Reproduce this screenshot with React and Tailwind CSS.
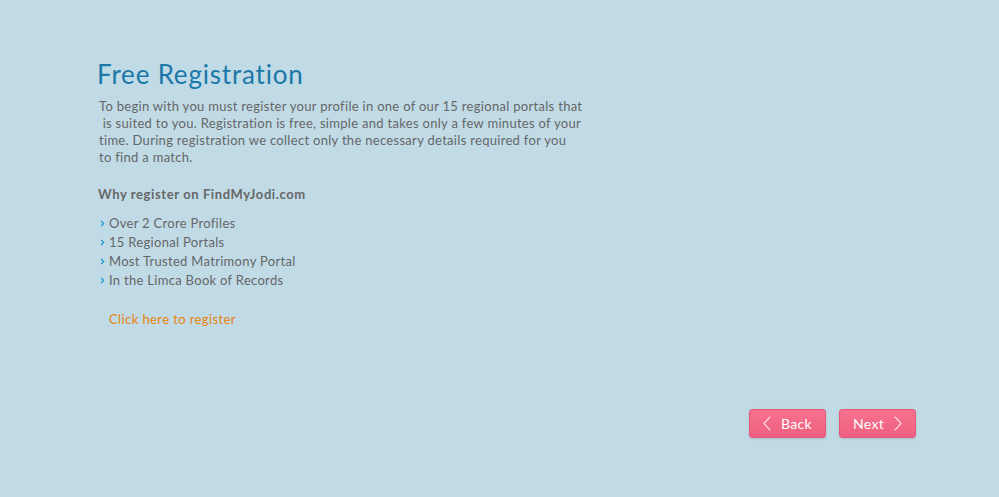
import { ChevronRight } from 'lucide-react'

const font = { fontFamily: 'Lato, "Open Sans", sans-serif' }

const reasons = [
  'Over 2 Crore Profiles',
  '15 Regional Portals',
  'Most Trusted Matrimony Portal',
  'In the Limca Book of Records',
]

// thin arrow used inside the pink buttons
function Arrow({ left }) {
  return (
    <svg className="h-[15px] w-[8px]" viewBox="0 0 8 15" fill="none" stroke="currentColor" strokeWidth={1.1}>
      <path d={left ? 'M7 1 1 7.5 7 14' : 'M1 1l6 6.5L1 14'} strokeLinecap="round" strokeLinejoin="round" />
    </svg>
  )
}

function NavButton({ children }) {
  return (
    <button
      type="button"
      className="flex h-[29px] w-[77px] items-center justify-center gap-[10px] rounded-[3px] border border-[#e8587a] bg-gradient-to-b from-[#f7728f] to-[#ee5f80] text-[14px] tracking-[0.3px] text-white shadow-sm"
    >
      {children}
    </button>
  )
}

export default function App() {
  return (
    <div
      className="flex h-[497px] w-full flex-col justify-between bg-[#c0dbe6] pb-[59px] pl-[97px] pr-[83px] pt-[58px]"
      style={font}
    >
      <div className="w-[520px]">
        <h1 className="text-[26px] leading-[32px] tracking-[0.8px] text-[#1b78a8]">Free Registration</h1>
        <p className="mt-[8px] pl-[2px] text-[13px] leading-[17px] tracking-[0.3px] text-[#666]">
          To begin with you must register your profile in one of our 15 regional portals that
          <br />
          &nbsp;is suited to you. Registration is free, simple and takes only a few minutes of your
          <br />
          time. During registration we collect only the necessary details required for you
          <br />
          to find a match.
        </p>
        <h2 className="mt-[20px] pl-[1px] text-[13px] font-bold leading-[17px] tracking-[0.6px] text-[#666]">
          Why register on FindMyJodi.com
        </h2>
        <ul className="mt-[11px] pl-[1px]">
          {reasons.map((r) => (
            <li key={r} className="flex h-[19px] items-center gap-[2px] text-[13px] tracking-[0.3px] text-[#666]">
              <ChevronRight className="h-[9px] w-[9px] text-[#1a8fd0]" strokeWidth={3} />
              {r}
            </li>
          ))}
        </ul>
        <a href="#" className="ml-[12px] mt-[20px] inline-block text-[13px] tracking-[0.4px] text-[#e8830c]">
          Click here to register
        </a>
      </div>

      <div className="flex justify-end gap-[13px]">
        <NavButton>
          <Arrow left />
          Back
        </NavButton>
        <NavButton>
          Next
          <Arrow />
        </NavButton>
      </div>
    </div>
  )
}
